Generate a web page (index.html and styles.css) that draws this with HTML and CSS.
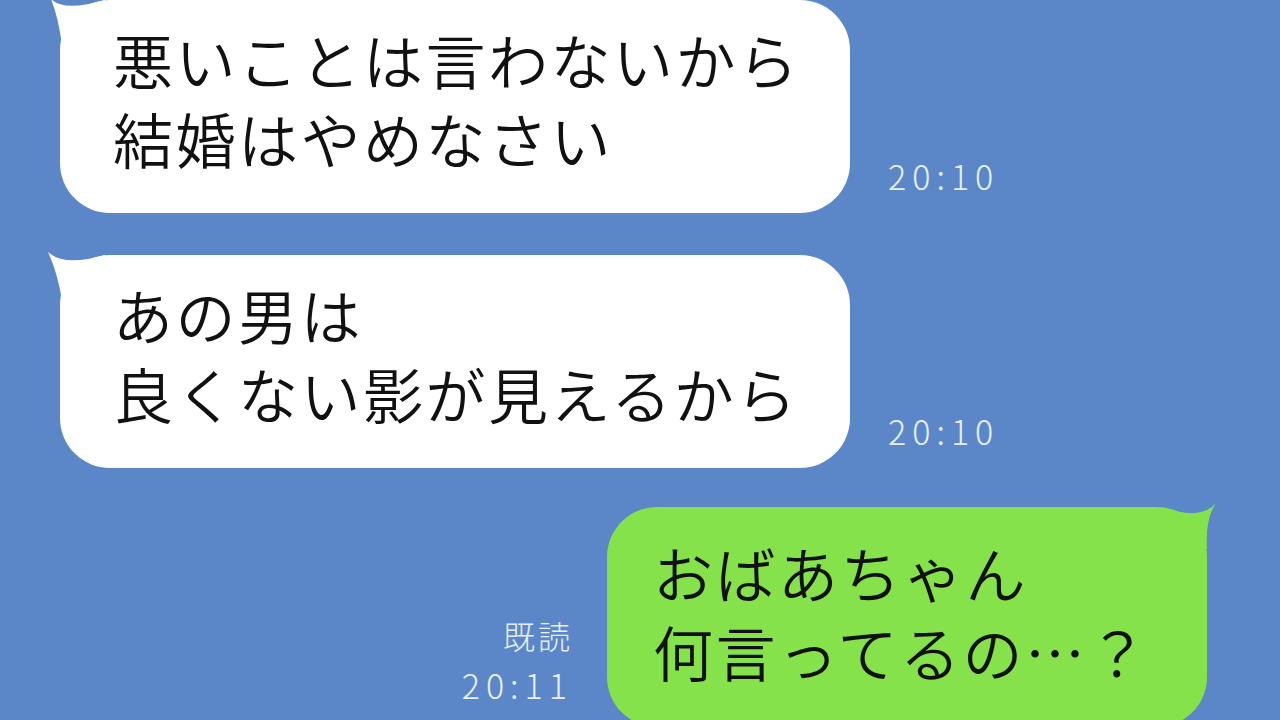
FILE: index.html
```html
<!DOCTYPE html>
<html lang="ja">
<head>
    <meta charset="UTF-8">
    <title>トーク</title>
    <link rel="stylesheet" href="styles.css">
</head>
<body>
    <div class="chat">
        <div class="row row-left">
            <div class="bubble bubble-in bubble-wide">
                <svg class="tail tail-left" width="70" height="60" viewBox="-20 -10 70 60">
                    <path d="M-9,-1 Q4,12 45,0 L45,45 L2,45 Q-2,16 -9,-1 Z"/>
                </svg>
                <p class="text">悪いことは言わないから<br>結婚はやめなさい</p>
            </div>
            <div class="meta">
                <span class="time">20:10</span>
            </div>
        </div>

        <div class="row row-left second">
            <div class="bubble bubble-in bubble-wide">
                <svg class="tail tail-left" width="70" height="60" viewBox="-20 -10 70 60">
                    <path d="M-12,-3 Q4,12 45,0 L45,45 L2,45 Q-3,16 -12,-3 Z"/>
                </svg>
                <p class="text">あの男は<br>良くない影が見えるから</p>
            </div>
            <div class="meta">
                <span class="time">20:10</span>
            </div>
        </div>

        <div class="row row-right">
            <div class="meta meta-right">
                <span class="read">既読</span>
                <span class="time">20:11</span>
            </div>
            <div class="bubble bubble-out">
                <svg class="tail tail-right" width="70" height="60" viewBox="-50 -10 70 60">
                    <path d="M9,-4 Q-6,14 -45,0 L-45,45 L0,42 Q-2,12 9,-4 Z"/>
                </svg>
                <p class="text">おばあちゃん<br>何言ってるの…？</p>
            </div>
        </div>
    </div>
</body>
</html>
```

FILE: styles.css
```css
body {
    margin: 0;
    background: #5b87c8;
    font-family: "Noto Sans CJK JP", "Noto Sans", sans-serif;
    overflow: hidden;
}
.chat {
    display: flex;
    flex-direction: column;
    width: 1280px;
    height: 720px;
}
.row {
    display: flex;
    align-items: flex-end;
}
.row-left {
    padding-left: 60px;
}
.row-left.second {
    margin-top: 42px;
}
.row-right {
    justify-content: flex-end;
    padding-right: 73px;
    margin-top: 39px;
}
.bubble {
    position: relative;
    border-radius: 50px;
    box-sizing: border-box;
    height: 213px;
}
.bubble-in {
    background: #fff;
    padding: 19px 0 0 53px;
}
.bubble-in .tail path { fill: #fff; }
.bubble-wide { width: 790px; }
.bubble-out {
    background: #86e24a;
    width: 600px;
    height: 220px;
    padding: 25px 0 0 46px;
}
.bubble-out .tail path { fill: #86e24a; }
.tail {
    position: absolute;
    top: -10px;
}
.tail-left { left: -20px; }
.tail-right { right: -20px; }
.text {
    position: relative;
    margin: 0;
    font-size: 60px;
    line-height: 79px;
    letter-spacing: 2.5px;
    font-weight: 350;
    color: #111;
    white-space: nowrap;
}
.meta {
    display: flex;
    flex-direction: column;
    align-items: flex-end;
    color: #e8f0fc;
    font-weight: 300;
    font-size: 34px;
    line-height: 48px;
    letter-spacing: 6px;
    padding: 0 0 13px 38px;
}
.meta-right {
    padding: 0 34px 18px 0;
}
.read {
    font-size: 32px;
    letter-spacing: 3px;
    margin-bottom: 2px;
}
```
